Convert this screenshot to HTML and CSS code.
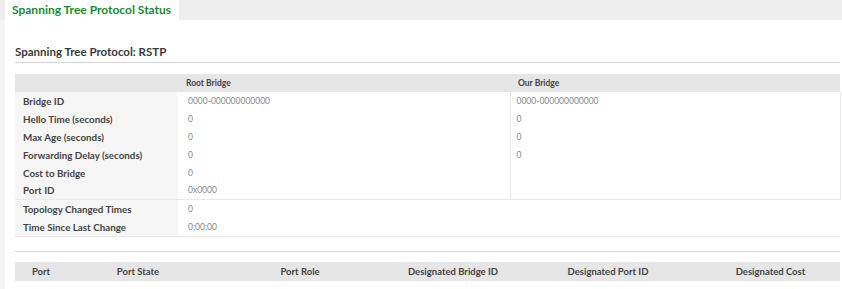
FILE: index.html
```html
<!DOCTYPE html>
<html lang="en">
<head>
    <meta charset="UTF-8">
    <title>Spanning Tree Protocol Status</title>
    <link rel="stylesheet" href="styles.css">
</head>
<body>
    <div class="tab-bar">
        <div class="tab active">Spanning Tree Protocol Status</div>
    </div>
    <div class="panel">
        <div class="section-title">Spanning Tree Protocol: RSTP</div>
        <table class="bridge-table">
            <colgroup>
                <col class="col-label">
                <col class="col-root">
                <col class="col-our">
            </colgroup>
            <thead>
                <tr>
                    <th></th>
                    <th>Root Bridge</th>
                    <th>Our Bridge</th>
                </tr>
            </thead>
            <tbody>
                <tr>
                    <td class="label">Bridge ID</td>
                    <td>0000-000000000000</td>
                    <td class="our">0000-000000000000</td>
                </tr>
                <tr>
                    <td class="label">Hello Time (seconds)</td>
                    <td>0</td>
                    <td class="our">0</td>
                </tr>
                <tr>
                    <td class="label">Max Age (seconds)</td>
                    <td>0</td>
                    <td class="our">0</td>
                </tr>
                <tr>
                    <td class="label">Forwarding Delay (seconds)</td>
                    <td>0</td>
                    <td class="our">0</td>
                </tr>
                <tr>
                    <td class="label">Cost to Bridge</td>
                    <td>0</td>
                    <td class="our"></td>
                </tr>
                <tr class="group-end">
                    <td class="label">Port ID</td>
                    <td>0x0000</td>
                    <td class="our"></td>
                </tr>
                <tr>
                    <td class="label">Topology Changed Times</td>
                    <td colspan="2">0</td>
                </tr>
                <tr class="last">
                    <td class="label">Time Since Last Change</td>
                    <td colspan="2">0:00:00</td>
                </tr>
            </tbody>
        </table>

        <div class="divider"></div>

        <table class="port-table">
            <colgroup>
                <col class="c-port">
                <col class="c-state">
                <col class="c-role">
                <col class="c-bridge">
                <col class="c-portid">
                <col class="c-cost">
            </colgroup>
            <thead>
                <tr>
                    <th>Port</th>
                    <th>Port State</th>
                    <th>Port Role</th>
                    <th>Designated Bridge ID</th>
                    <th>Designated Port ID</th>
                    <th>Designated Cost</th>
                </tr>
            </thead>
        </table>
    </div>
</body>
</html>
```

FILE: styles.css
```css
body {
    margin: 0;
    background-color: #f3f3f3;
    font-family: "Lato", "Liberation Sans", sans-serif;
    color: #444;
}
.tab-bar {
    display: flex;
    height: 20px;
    background-color: #eeeeee;
    padding-left: 5px;
}
.tab {
    padding: 0 8px 0 7px;
    line-height: 20px;
    font-size: 12px;
    font-weight: bold;
    color: #1b8a2e;
    background-color: #fff;
}
.panel {
    margin-left: 5px;
    padding: 25px 2px 10px 10px;
    background-color: #fff;
    min-height: calc(100vh - 20px);
    box-sizing: border-box;
}
.section-title {
    font-size: 11.5px;
    font-weight: bold;
    color: #3a3a3a;
    padding-bottom: 4px;
    border-bottom: 1px solid #d6d6d6;
    margin-bottom: 11px;
}
table {
    width: 825px;
    border-collapse: collapse;
    table-layout: fixed;
    font-size: 8.5px;
}
.col-label { width: 163px; }
.col-root { width: 332px; }
.col-our { width: 330px; }
.bridge-table th {
    background-color: #e6e6e6;
    height: 18px;
    padding: 0 0 0 8px;
    text-align: left;
    font-weight: bold;
    color: #444;
}
.bridge-table td {
    height: 17.9px;
    padding: 0 0 0 10px;
    color: #8a8a8a;
}
.bridge-table td.label {
    padding-left: 8px;
    background-color: #f6f6f6;
    font-size: 9.8px;
    line-height: 12px;
    font-weight: bold;
    color: #444;
}
.bridge-table td.our {
    border-left: 1px solid #e8e8e8;
    border-right: 1px solid #e8e8e8;
    padding-left: 6px;
}
.bridge-table tr.group-end td {
    border-bottom: 1px solid #e8e8e8;
}
.bridge-table tr.last td {
    border-bottom: 1px solid #e8e8e8;
}
.divider {
    width: 825px;
    margin-top: 14px;
    border-top: 1px solid #d6d6d6;
    height: 10px;
}
.c-port { width: 52px; }
.c-state { width: 142px; }
.c-role { width: 182px; }
.c-bridge { width: 124px; }
.c-portid { width: 186px; }
.c-cost { width: 139px; }
.port-table th {
    background-color: #e6e6e6;
    height: 19px;
    padding: 0;
    text-align: center;
    font-size: 9.5px;
    font-weight: bold;
    color: #444;
}
```
